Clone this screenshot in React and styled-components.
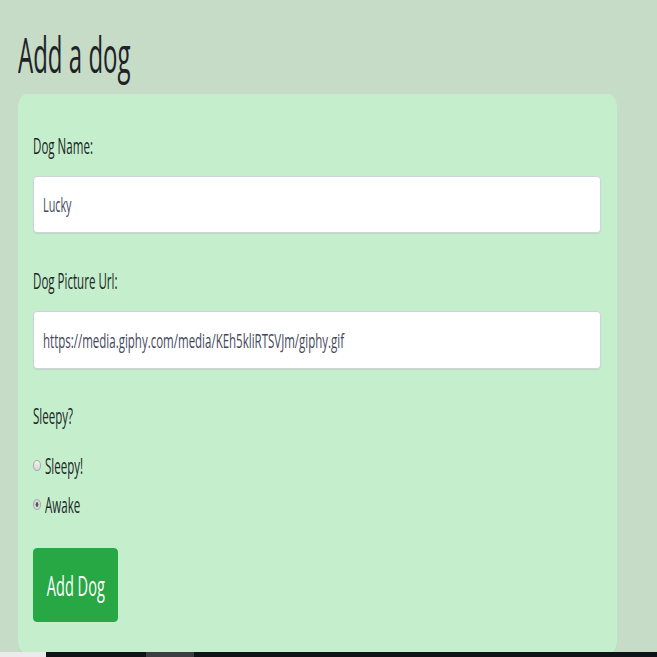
import styled, { createGlobalStyle } from 'styled-components'

const GlobalStyle = createGlobalStyle`
    html, body {
        margin: 0;
        padding: 0;
        height: 100%;
        background: #c6dcc6;
        font-family: "Open Sans", "Liberation Sans", sans-serif;
        color: #212529;
    }
    #root {
        height: 100%;
    }
`;

const App = () => {
    return(
        <Page>
            <GlobalStyle />
            <Main>
                <Title><Squish $sx={0.49}>Add a dog</Squish></Title>
                <Card>
                    <Label><Squish $sx={0.55}>Dog Name:</Squish></Label>
                    <Field role="textbox">
                        <Squish $sx={0.54}>Lucky</Squish>
                    </Field>

                    <Label $gap="33px"><Squish $sx={0.55}>Dog Picture Url:</Squish></Label>
                    <Field role="textbox" $tall>
                        <Squish $sx={0.575}>https://media.giphy.com/media/KEh5kliRTSVJm/giphy.gif</Squish>
                    </Field>

                    <Label $gap="32px"><Squish $sx={0.55}>Sleepy?</Squish></Label>
                    <Options>
                        <Option>
                            <Radio />
                            <Squish $sx={0.55}>Sleepy!</Squish>
                        </Option>
                        <Option>
                            <Radio $checked />
                            <Squish $sx={0.55}>Awake</Squish>
                        </Option>
                    </Options>

                    <Button type="button"><Squish $sx={0.52} $center>Add Dog</Squish></Button>
                </Card>
            </Main>
            <TaskBar>
                <BarPart $w="46px" $bg="#ebebeb" />
                <BarPart $w="100px" $bg="#0f1419" />
                <BarPart $w="48px" $bg="#3a3d42" />
                <BarPart $grow $bg="#0f1419" />
            </TaskBar>
        </Page>
    )
}

const Page = styled.div`
    height: 100vh;
    display: flex;
    flex-direction: column;
    overflow: hidden;
`;

const Main = styled.main`
    flex: 1;
    min-height: 0;
    overflow: hidden;
    padding: 0 40px 0 18px;
    display: flex;
    flex-direction: column;
`;

const Squish = styled.span`
    display: inline-block;
    white-space: nowrap;
    transform: scaleX(${p => p.$sx});
    transform-origin: ${p => p.$center ? 'center' : 'left'} center;
`;

const Title = styled.h1`
    margin: 25px 0 10px;
    font-size: 49px;
    font-weight: 400;
    line-height: 59px;
    color: #1f2328;
`;

const Card = styled.section`
    flex: none;
    background: #c5efcc;
    border-radius: 9px / 13px;
    padding: 37px 16px 32px 15px;
    border-bottom: 1px solid #b2d4b6;
`;

const Label = styled.div`
    font-size: 21px;
    line-height: 31px;
    margin-top: ${p => p.$gap || '0'};
    margin-bottom: 14px;
`;

const Field = styled.div`
    height: ${p => p.$tall ? '58px' : '57px'};
    box-sizing: border-box;
    display: flex;
    align-items: center;
    padding: 0 9px;
    background: #fff;
    border: 1px solid #cfd3dc;
    border-radius: 4px;
    box-shadow: 0 1px 1px rgba(0, 0, 0, 0.08);
    font-size: 20px;
    color: #46475e;
    overflow: hidden;
`;

const Options = styled.div`
    margin: 5px 0 24px;
    display: flex;
    flex-direction: column;
`;

const Option = styled.label`
    height: 39px;
    display: flex;
    align-items: center;
    gap: 4px;
    font-size: 21px;
`;

const Radio = styled.span`
    flex: none;
    width: 8px;
    height: 11px;
    box-sizing: border-box;
    border-radius: 50%;
    border: 1px solid #a9a9a9;
    background: ${p => p.$checked
        ? 'radial-gradient(ellipse at center, #555 0 30%, #d8d8d8 40% 100%)'
        : 'linear-gradient(#f4f4f4, #d6d6d6)'};
`;

const Button = styled.button`
    width: 85px;
    height: 74px;
    display: flex;
    align-items: center;
    justify-content: center;
    padding: 0;
    background: #28a745;
    border: 1px solid #28a745;
    border-radius: 4px;
    color: #fff;
    font-family: inherit;
    font-size: 28px;
    cursor: pointer;
    &:hover {
        background: #218838;
    }
`;

const TaskBar = styled.footer`
    height: 5px;
    flex: none;
    display: flex;
`;

const BarPart = styled.div`
    width: ${p => p.$w || 'auto'};
    flex: ${p => p.$grow ? 1 : 'none'};
    background: ${p => p.$bg};
`;

export default App;
